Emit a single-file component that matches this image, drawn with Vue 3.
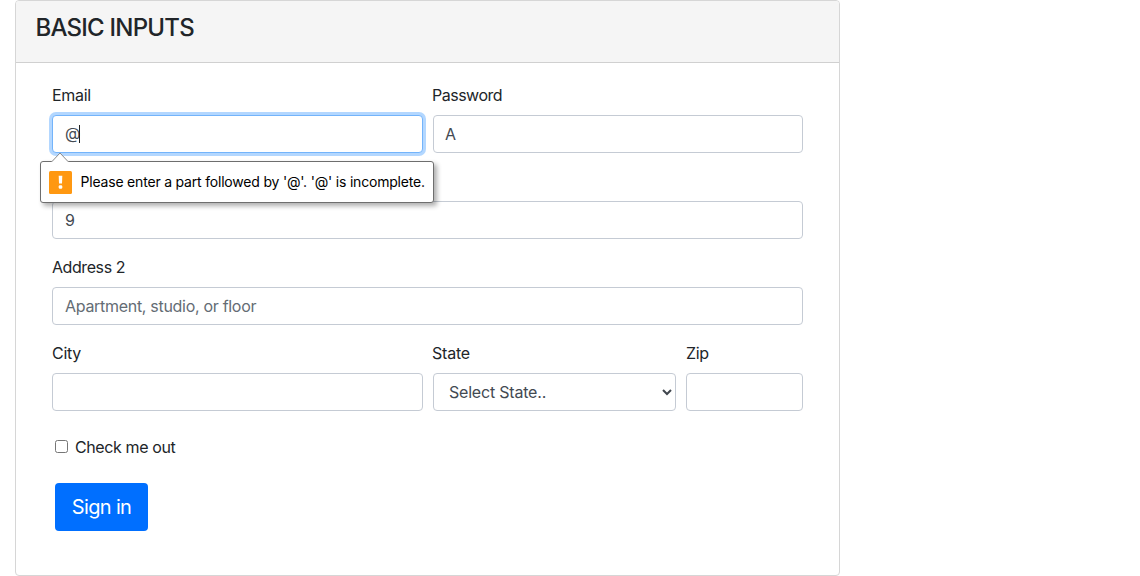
<script setup>
const states = ['Select State..']
</script>

<template>
  <main class="card">
    <header><h1>BASIC INPUTS</h1></header>
    <form novalidate @submit.prevent>
      <div class="row two">
        <div class="field">
          <label>Email</label>
          <div class="control focused"><span class="at">@</span><i class="caret"></i>
            <div class="tip">
              <svg class="arrow" width="18" height="10" viewBox="0 0 18 10"><path d="M0 9.5H1L9 1L17 9.5H18" fill="#fff" stroke="#8a8a8a" /><path d="M1.5 9.5H16.5" stroke="#fff" /></svg>
              <svg class="warn" width="23" height="23" viewBox="0 0 23 23"><rect width="23" height="23" rx="1.5" fill="#ff9811" /><path d="M9.7 4.7h3.6l-.3 7.8h-3z" fill="#fff" /><rect x="9.7" y="14.3" width="3.6" height="3.4" rx="1.2" fill="#fff" /></svg>
              <span>Please enter a part followed by '@'. '@' is incomplete.</span>
            </div>
          </div>
        </div>
        <div class="field"><label class="password">Password</label><div class="control"><span class="letter">A</span></div></div>
      </div>
      <div class="row">
        <div class="field"><label></label><div class="control"><span>9</span></div></div>
      </div>
      <div class="row">
        <div class="field"><label class="address">Address 2</label><div class="control placeholder"><span>Apartment, studio, or floor</span></div></div>
      </div>
      <div class="row three">
        <div class="field"><label>City</label><div class="control"></div></div>
        <div class="field"><label class="state">State</label><div class="control select"><span>{{ states[0] }}</span>
          <svg width="10" height="7" viewBox="0 0 10 7"><path d="M1 1l4 4 4-4" fill="none" stroke="#40464d" stroke-width="2" /></svg></div></div>
        <div class="field"><label>Zip</label><div class="control"></div></div>
      </div>
      <div class="check"><i class="box"></i><span>Check me out</span></div>
      <button type="button"><span>Sign in</span></button>
    </form>
  </main>
</template>

<style>
body { background: #fff; }
</style>

<style scoped>
* { box-sizing: border-box; }
.card { width: 825px; height: 576px; margin-left: 15px; border: 1px solid #d6d6d6; border-radius: 4px; font: 16px/24px Inter, "Liberation Sans", sans-serif; color: #212529; overflow: hidden; }
header { height: 62px; padding: 12px 20px; background: #f5f5f5; border-bottom: 1px solid #d0d0d0; }
h1 { margin: 0 0 0 -0.5px; font-size: 24px; line-height: 29px; font-weight: 500; letter-spacing: -0.78px; white-space: nowrap; }
form { padding: 20px 36px; }
.row { display: grid; gap: 10px; margin-bottom: 16px; }
.two { grid-template-columns: 371px 370px; }
.three { grid-template-columns: 371px 243px 117px; }
label { display: block; height: 24px; margin-bottom: 8px; letter-spacing: -0.3px; }
.password { margin-left: -1px; letter-spacing: -0.5px; }
.state { margin-left: -1px; letter-spacing: -0.2px; }
.address { letter-spacing: -0.42px; }
.control { position: relative; display: flex; align-items: center; height: 38px; padding: 0 12px; border: 1px solid #c5cbd4; border-radius: 4px; color: #434a52; letter-spacing: -0.3px; background: #fff; white-space: nowrap; }
.focused { border-color: #73b4fb; box-shadow: 0 0 0 3px #b3d7ff; }
.at { margin-top: -2px; letter-spacing: -1.1px; }
.letter { margin-left: -1px; }
.caret { width: 1px; height: 18px; background: #222; }
.placeholder { color: #646c74; }
.select { padding: 0 3px 0 15px; justify-content: space-between; letter-spacing: -0.2px; }
.tip { position: absolute; z-index: 2; left: -13px; top: 45px; width: 394px; height: 42px; padding-left: 8px; display: flex; align-items: center; gap: 8.5px; border: 1px solid #6e6e6e; border-radius: 3px; background: #fff; color: #000; font-size: 14px; letter-spacing: -0.195px; box-shadow: 3px 3px 5px rgba(0,0,0,.32); }
.arrow { position: absolute; left: 10px; top: -10px; }
.check { display: flex; align-items: center; height: 24px; margin-top: 24px; padding-left: 3px; gap: 7px; letter-spacing: -0.39px; }
.box { width: 13px; height: 13px; margin-top: -2px; border: 1px solid #767676; border-radius: 2.5px; }
button { display: block; margin: 24px 0 0 3px; width: 93px; height: 48px; padding: 0; border: 0; border-radius: 4px; color: #fff; background: #006fff; font: 20px/30px Inter, "Liberation Sans", sans-serif; letter-spacing: -0.65px; }
</style>
